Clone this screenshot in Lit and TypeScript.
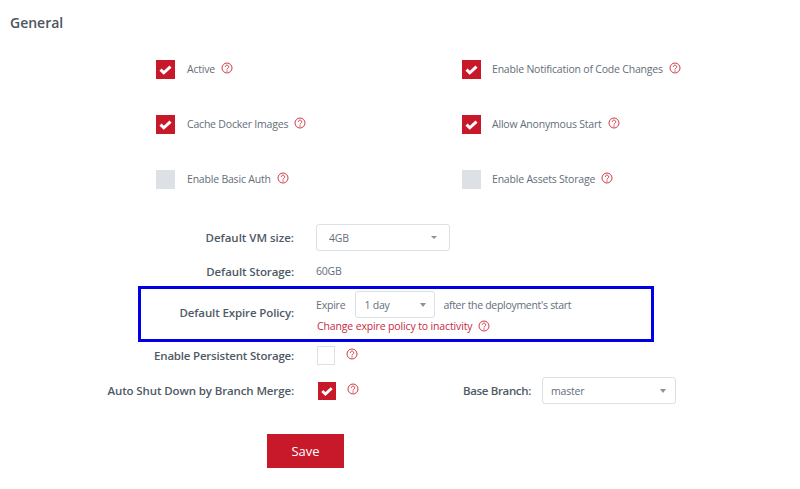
import { LitElement, html, css, svg } from "lit";
import { customElement } from "lit/decorators.js";

const help = html`<svg class="help" viewBox="0 0 12 12" width="12" height="12" aria-hidden="true">
  <circle cx="6" cy="6" r="5" fill="none" stroke="#cf3b49" stroke-width="1"/>
  ${svg`<path d="M4.3 4.8a1.7 1.7 0 1 1 2.6 1.45c-.6.37-.9.65-.9 1.25" fill="none" stroke="#cf3b49" stroke-width="1"/>
  <circle cx="6" cy="9" r=".7" fill="#cf3b49"/>`}
</svg>`;

const tick = html`<svg viewBox="0 0 19 19" width="100%" height="100%" aria-hidden="true">
  <path d="M4.5 9.6l3.3 3.2 6.7-6.2" fill="none" stroke="#fff" stroke-width="3"/>
</svg>`;

@customElement("app-root")
export class AppRoot extends LitElement {
  static styles = css`
    :host {
      display: block;
      width: 800px;
      height: 489px;
      overflow: hidden;
      background: #fff;
      font-family: "Open Sans", "Noto Sans", sans-serif;
      font-size: 10.5px;
      letter-spacing: -0.2px;
      color: #646e79;
    }
    h2 {
      margin: 0;
      padding: 13px 0 0 10px;
      font-size: 14px;
      line-height: 19px;
      font-weight: 600;
      letter-spacing: 0;
      color: #4c5560;
    }
    .checks {
      display: grid;
      grid-template-columns: 306px 306px;
      grid-auto-rows: 19px;
      row-gap: 36px;
      margin: 28px 0 0 156px;
    }
    .check {
      display: flex;
      align-items: center;
    }
    .box {
      flex: none;
      width: 19px;
      height: 19px;
      box-sizing: border-box;
    }
    .on { background: #c8192b; }
    .off { background: #dde0e5; }
    .empty { background: #fff; border: 1px solid #dde0e5; }
    .check .text { margin: -2px 0 0 12px; }
    .check:nth-child(even) .text { margin-left: 11px; }
    .check .help { margin-left: 6px; margin-top: -3px; }
    .row {
      display: flex;
      align-items: center;
    }
    .label {
      width: 294px;
      flex: none;
      text-align: right;
      font-size: 11.5px;
      letter-spacing: -0.12px;
      font-weight: 600;
      color: #4f5a66;
    }
    .control {
      margin-left: 22px;
      display: flex;
      align-items: center;
    }
    .select {
      box-sizing: border-box;
      height: 27px;
      display: flex;
      align-items: center;
      justify-content: space-between;
      border: 1px solid #dcdfe3;
      border-radius: 3px;
      background: #fff;
      padding: 0 8px;
    }
    .wide { width: 134px; }
    .narrow { width: 80px; }
    .caret {
      width: 0;
      height: 0;
      border-left: 3.5px solid transparent;
      border-right: 3.5px solid transparent;
      border-top: 4px solid #8a929b;
    }
    .vm { margin-top: 35px; }
    .vm .label { letter-spacing: -0.02px; }
    .vm .select { padding: 0 12px 0 12px; }
    .vm .caret { border-left-width: 3px; border-right-width: 3px; border-top-width: 3px; }
    .storage { margin-top: 12px; height: 16px; }
    .policy {
      box-sizing: border-box;
      width: 516px;
      height: 56px;
      margin: 7px 0 0 138px;
      border: 3px solid #0000e6;
      display: flex;
      align-items: center;
    }
    .policy .label { width: 153px; padding-bottom: 3px; }
    .policy .control {
      margin-left: 22px;
      padding-bottom: 4px;
      flex-direction: column;
      align-items: flex-start;
      gap: 1px;
    }
    .line { display: flex; align-items: center; }
    .line .select { margin: 0 8px 0 10px; }
    .after { letter-spacing: -0.3px; }
    .link { color: #c8293e; display: flex; align-items: center; height: 14px; margin-left: 1px; letter-spacing: -0.14px; }
    .link .help { margin-left: 6px; }
    .persist { margin-top: 4px; height: 19px; }
    .persist .label { letter-spacing: -0.2px; }
    .persist .control { margin-left: 23px; align-items: flex-start; }
    .persist .box { width: 18px; }
    .persist .help { margin: 2px 0 0 11px; }
    .shut { margin-top: 12px; height: 27px; }
    .shut .control { margin-left: 24px; }
    .shut .box { width: 18px; height: 18px; }
    .shut .help { margin: -4px 0 0 11px; }
    .branch {
      width: 172px;
      flex: none;
      text-align: right;
      font-size: 11.5px;
      letter-spacing: -0.34px;
      font-weight: 600;
      color: #4f5a66;
    }
    .shut .select { margin-left: 11px; padding-right: 9px; }
    button {
      display: block;
      width: 77px;
      height: 34px;
      margin: 30px 0 0 267px;
      border: 0;
      padding: 0;
      background: #c8192b;
      color: #fff;
      font: inherit;
      font-size: 13px;
      letter-spacing: 0;
    }
  `;

  private check(text: string, on: boolean) {
    return html`<div class="check">
      <div class="box ${on ? "on" : "off"}">${on ? tick : ""}</div>
      <span class="text">${text}</span>${help}
    </div>`;
  }

  render() {
    return html`
      <h2>General</h2>
      <div class="checks">
        ${this.check("Active", true)}
        ${this.check("Enable Notification of Code Changes", true)}
        ${this.check("Cache Docker Images", true)}
        ${this.check("Allow Anonymous Start", true)}
        ${this.check("Enable Basic Auth", false)}
        ${this.check("Enable Assets Storage", false)}
      </div>
      <div class="row vm">
        <div class="label">Default VM size:</div>
        <div class="control">
          <div class="select wide"><span>4GB</span><i class="caret"></i></div>
        </div>
      </div>
      <div class="row storage">
        <div class="label">Default Storage:</div>
        <div class="control">60GB</div>
      </div>
      <div class="policy">
        <div class="label">Default Expire Policy:</div>
        <div class="control">
          <div class="line">
            <span>Expire</span>
            <div class="select narrow"><span>1 day</span><i class="caret"></i></div>
            <span class="after">after the deployment's start</span>
          </div>
          <div class="link"><span>Change expire policy to inactivity</span>${help}</div>
        </div>
      </div>
      <div class="row persist">
        <div class="label">Enable Persistent Storage:</div>
        <div class="control">
          <div class="box empty"></div>${help}
        </div>
      </div>
      <div class="row shut">
        <div class="label">Auto Shut Down by Branch Merge:</div>
        <div class="control">
          <div class="box on">${tick}</div>${help}
        </div>
        <div class="branch">Base Branch:</div>
        <div class="select wide"><span>master</span><i class="caret"></i></div>
      </div>
      <button>Save</button>
    `;
  }
}
